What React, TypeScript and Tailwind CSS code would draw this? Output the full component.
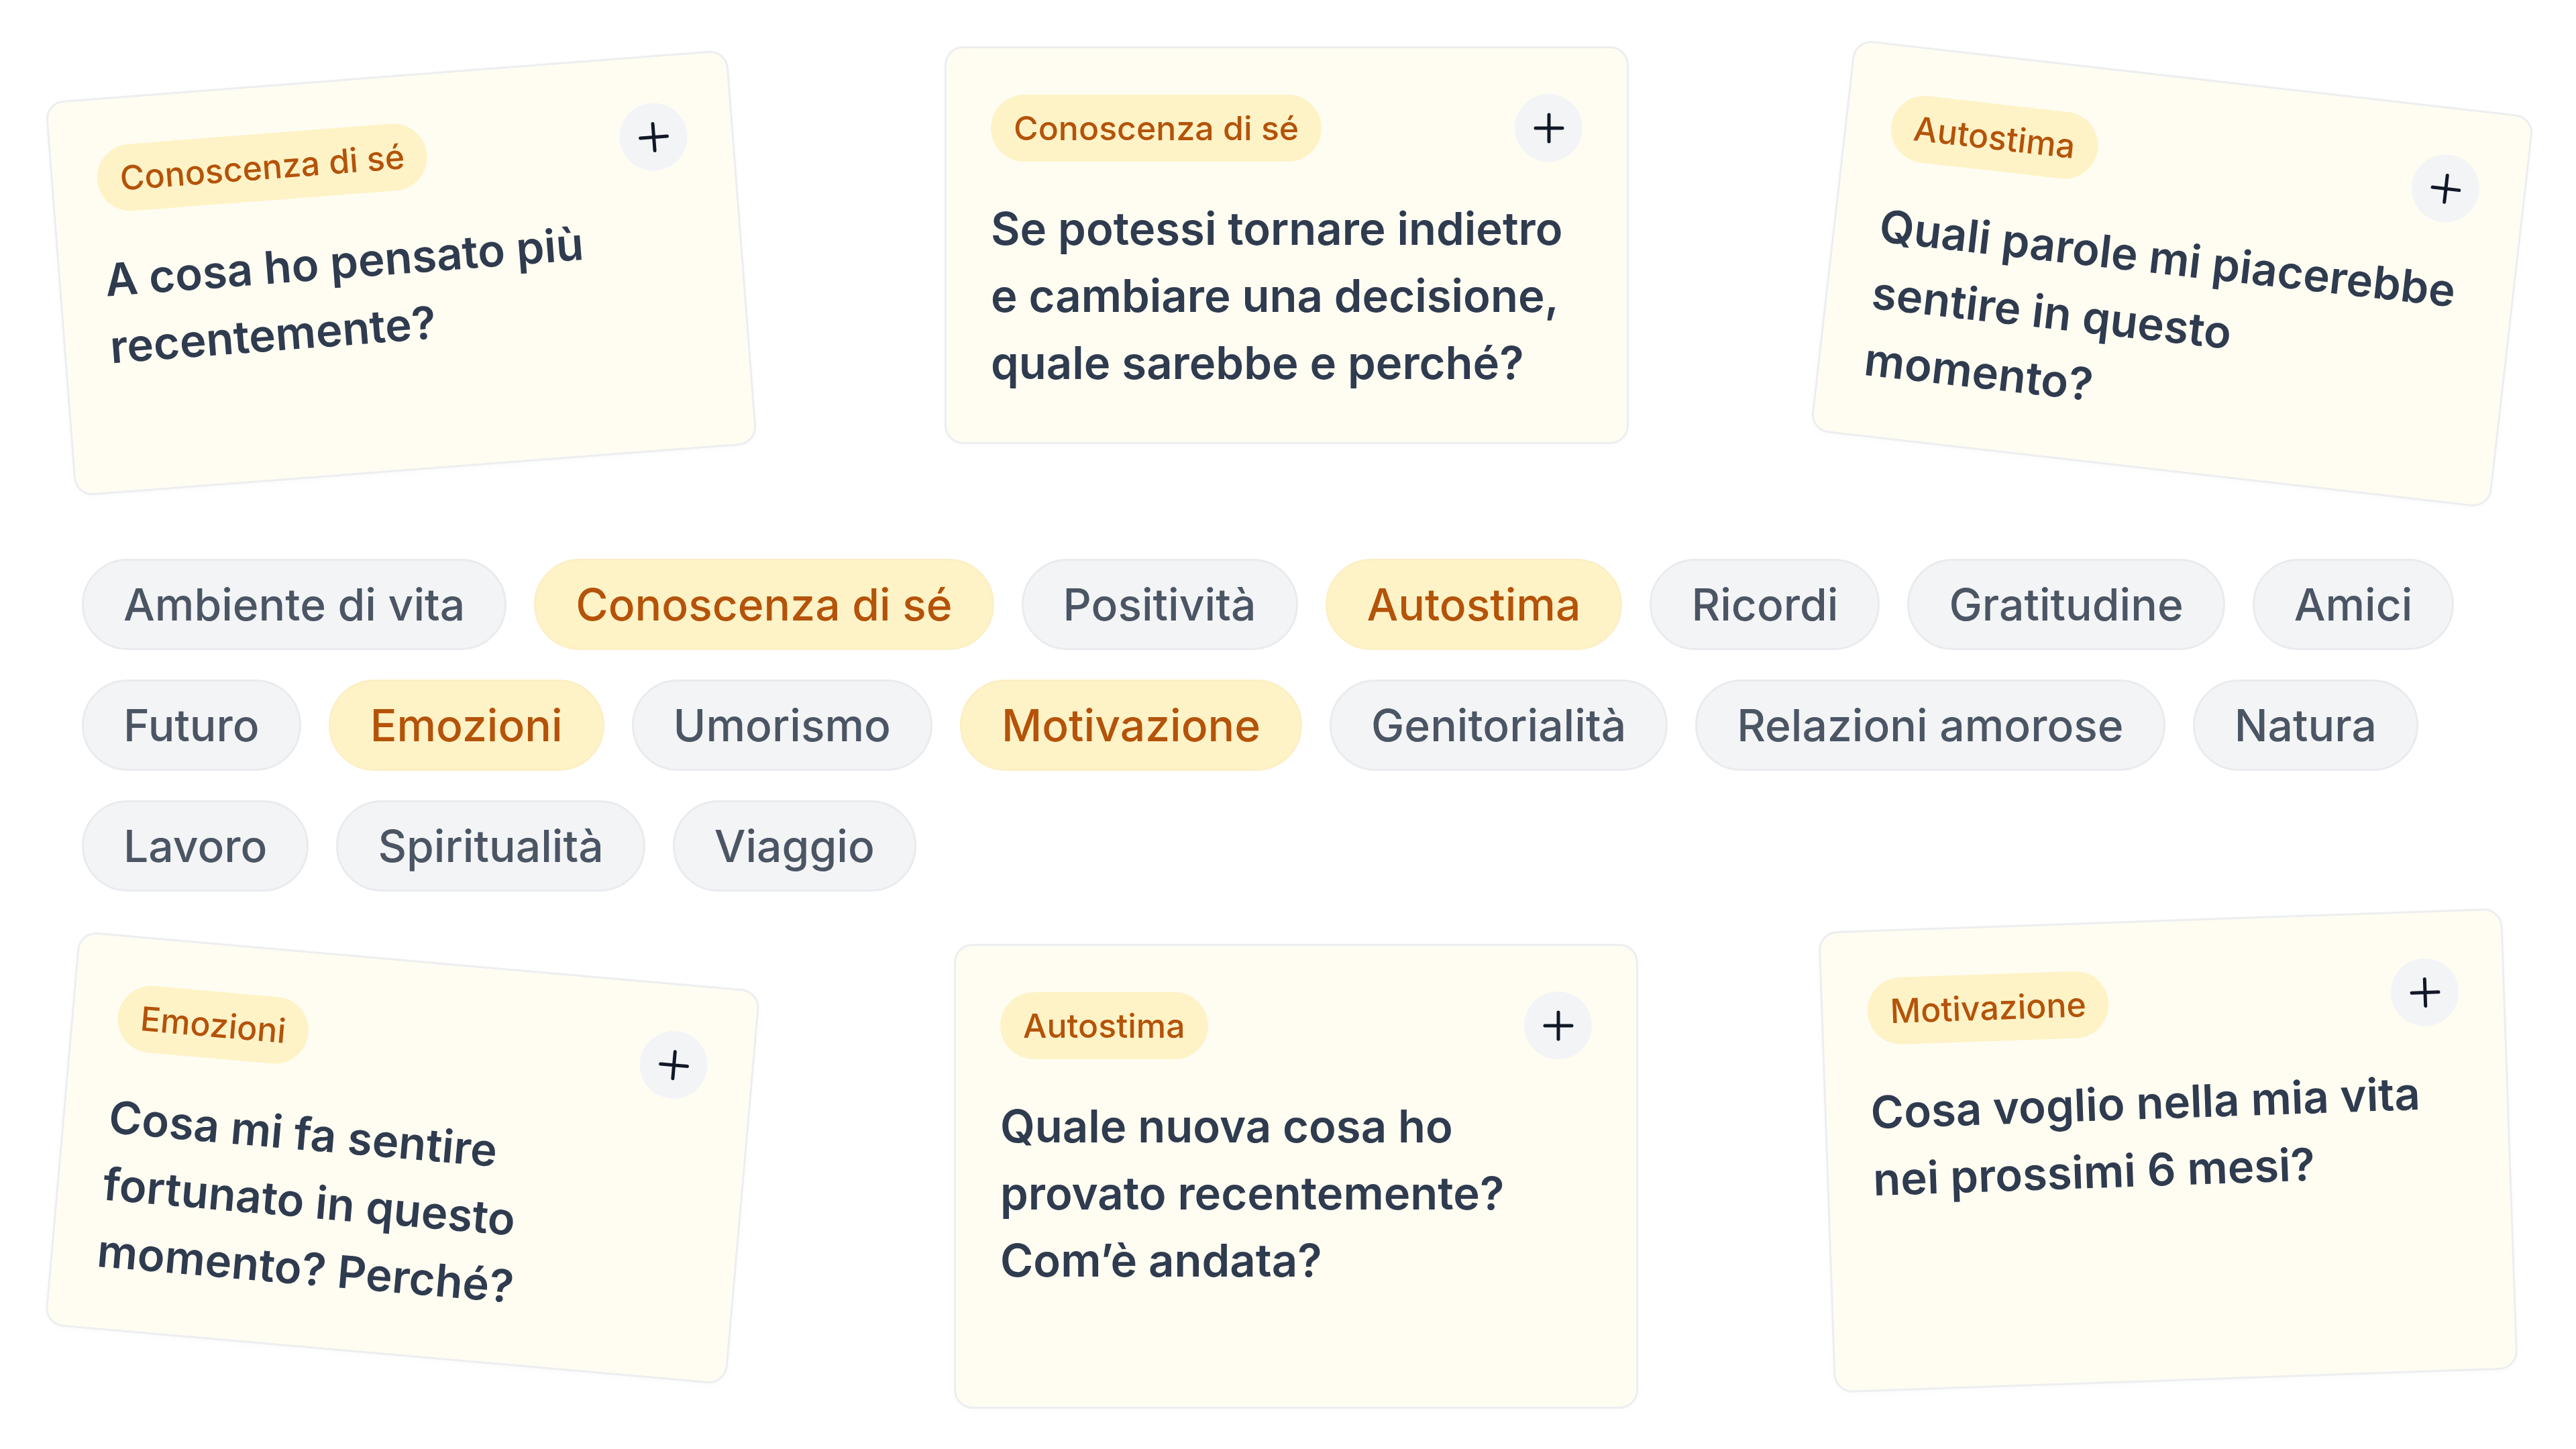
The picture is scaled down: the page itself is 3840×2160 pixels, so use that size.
import React from "react";

type CardProps = {
  tag: string;
  lines: string[];
  className: string;
};

function PlusIcon() {
  return (
    <svg width="46" height="46" viewBox="0 0 46 46" fill="none">
      <path d="M3 23H43M23 3V43" stroke="#111827" strokeWidth="5" strokeLinecap="round" />
    </svg>
  );
}

function Card({ tag, lines, className }: CardProps) {
  return (
    <div
      className={
        "w-[1020px] rounded-[28px] border-[3px] border-[#eceef0] bg-[#fffdf2] pl-[66px] pr-[66px] pt-[68px] shadow-[0_2px_8px_rgba(0,0,0,0.025)] " +
        className
      }
    >
      <div className="flex items-center justify-between">
        <span className="rounded-full bg-[#fef3c7] px-[34px] py-[12px] text-[50px] leading-[76px] font-medium text-[#b45309]">
          {tag}
        </span>
        <div className="flex h-[101px] w-[101px] items-center justify-center rounded-full bg-[#f3f4f6]">
          <PlusIcon />
        </div>
      </div>
      <p className="mt-[50px] text-[67px] leading-[100px] font-semibold text-[#2f3b4e]">
        {lines.map((l, i) => (
          <React.Fragment key={i}>
            {l}
            {i < lines.length - 1 && <br />}
          </React.Fragment>
        ))}
      </p>
    </div>
  );
}

const pills: { label: string; active?: boolean }[] = [
  { label: "Ambiente di vita" },
  { label: "Conoscenza di sé", active: true },
  { label: "Positività" },
  { label: "Autostima", active: true },
  { label: "Ricordi" },
  { label: "Gratitudine" },
  { label: "Amici" },
  { label: "Futuro" },
  { label: "Emozioni", active: true },
  { label: "Umorismo" },
  { label: "Motivazione", active: true },
  { label: "Genitorialità" },
  { label: "Relazioni amorose" },
  { label: "Natura" },
  { label: "Lavoro" },
  { label: "Spiritualità" },
  { label: "Viaggio" },
];

export default function App() {
  return (
    <div className="h-[2160px] w-[3840px] overflow-hidden bg-white font-['Inter',sans-serif]">
      <div className="grid grid-cols-[repeat(3,1020px)] items-start justify-center gap-x-[300px] pt-[69px]">
        <Card
          tag="Conoscenza di sé"
          lines={["A cosa ho pensato più", "recentemente?"]}
          className="h-[590px] rotate-[-4.4deg] translate-y-[43px] -translate-x-[2px]"
        />
        <Card
          tag="Conoscenza di sé"
          lines={["Se potessi tornare indietro", "e cambiare una decisione,", "quale sarebbe e perché?"]}
          className="h-[593px] -translate-x-[2px]"
        />
        <Card
          tag="Autostima"
          lines={["Quali parole mi piacerebbe", "sentire in questo", "momento?"]}
          className="h-[588px] rotate-[6.5deg] translate-y-[45px] -translate-x-[2px]"
        />
      </div>

      <div className="mt-[171px] flex flex-wrap gap-x-[41px] gap-y-[44px] px-[122px]">
        {pills.map((p) => (
          <span
            key={p.label}
            className={
              p.active
                ? "rounded-full border-[3px] border-[#fcefc4] bg-[#fef3c7] px-[59px] text-[66px] leading-[130px] font-medium text-[#b45309]"
                : "rounded-full border-[3px] border-[#e9ebee] bg-[#f3f4f6] px-[59px] text-[66px] leading-[130px] font-medium text-[#4b5563]"
            }
          >
            {p.label}
          </span>
        ))}
      </div>

      <div className="mt-[78px] grid grid-cols-[repeat(3,1020px)] items-start justify-center gap-x-[300px]">
        <Card
          tag="Emozioni"
          lines={["Cosa mi fa sentire", "fortunato in questo", "momento? Perché?"]}
          className="h-[590px] rotate-[5deg] translate-y-[24px]"
        />
        <Card
          tag="Autostima"
          lines={["Quale nuova cosa ho", "provato recentemente?", "Com’è andata?"]}
          className="h-[693px] translate-x-[12px]"
        />
        <Card
          tag="Motivazione"
          lines={["Cosa voglio nella mia vita", "nei prossimi 6 mesi?"]}
          className="h-[688px] rotate-[-2deg] -translate-y-[36px] -translate-x-[8px]"
        />
      </div>
    </div>
  );
}
